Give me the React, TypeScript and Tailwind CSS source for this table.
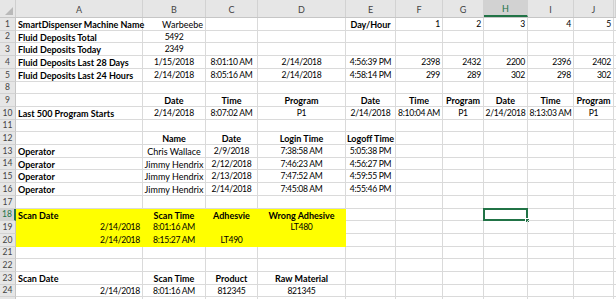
import React from "react";

type Cell = { t?: string; a?: "l" | "c" | "r"; b?: boolean };
type Row = { n: string; h: string; cells: Cell[]; yellow?: boolean; sel?: boolean };

const colW = [
  "w-[127px]",
  "w-[63px]",
  "w-[52px]",
  "w-[88px]",
  "w-[50px]",
  "w-[47px]",
  "w-[41px]",
  "w-[44px]",
  "w-[46px]",
  "w-[40px]",
  "w-[2px]",
];
const letters = ["A", "B", "C", "D", "E", "F", "G", "H", "I", "J", ""];

const L = (t: string, b = false): Cell => ({ t, a: "l", b });
const C = (t: string, b = false): Cell => ({ t, a: "c", b });
const R = (t: string, b = false): Cell => ({ t, a: "r", b });
const E: Cell = {};

const rows: Row[] = [
  { n: "1", h: "h-[13px]", cells: [L("SmartDispenser Machine Name", true), R("Warbeebe"), E, E, C("Day/Hour", true), R("1"), R("2"), R("3"), R("4"), R("5")] },
  { n: "2", h: "h-[12px]", cells: [L("Fluid Deposits Total", true), C("5492")] },
  { n: "3", h: "h-[13px]", cells: [L("Fluid Deposits Today", true), C("2349")] },
  { n: "4", h: "h-[13px]", cells: [L("Fluid Deposits Last 28 Days", true), C("1/15/2018"), C("8:01:10 AM"), C("2/14/2018"), C("4:56:39 PM"), R("2398"), R("2432"), R("2200"), R("2396"), R("2402")] },
  { n: "5", h: "h-[13px]", cells: [L("Fluid Deposits Last 24 Hours", true), C("2/14/2018"), C("8:05:16 AM"), C("2/14/2018"), C("4:58:14 PM"), R("299"), R("289"), R("302"), R("298"), R("302")] },
  { n: "8", h: "h-[12px]", cells: [] },
  { n: "9", h: "h-[13px]", cells: [E, C("Date", true), C("Time", true), C("Program", true), C("Date", true), C("Time", true), C("Program", true), C("Date", true), C("Time", true), C("Program", true)] },
  { n: "10", h: "h-[13px]", cells: [L("Last 500 Program Starts", true), C("2/14/2018"), C("8:07:02 AM"), C("P1"), C("2/14/2018"), C("8:10:04 AM"), C("P1"), C("2/14/2018"), C("8:13:03 AM"), C("P1")] },
  { n: "11", h: "h-[12px]", cells: [] },
  { n: "12", h: "h-[13px]", cells: [E, C("Name", true), C("Date", true), C("Login Time", true), C("Logoff Time", true)] },
  { n: "13", h: "h-[13px]", cells: [L("Operator", true), C("Chris Wallace"), C("2/9/2018"), C("7:38:58 AM"), C("5:05:38 PM")] },
  { n: "14", h: "h-[12px]", cells: [L("Operator", true), C("Jimmy Hendrix"), C("2/12/2018"), C("7:46:23 AM"), C("4:56:27 PM")] },
  { n: "15", h: "h-[13px]", cells: [L("Operator", true), C("Jimmy Hendrix"), C("2/13/2018"), C("7:47:52 AM"), C("4:59:55 PM")] },
  { n: "16", h: "h-[13px]", cells: [L("Operator", true), C("Jimmy Hendrix"), C("2/14/2018"), C("7:45:08 AM"), C("4:55:46 PM")] },
  { n: "17", h: "h-[13px]", cells: [] },
  { n: "18", h: "h-[12px]", yellow: true, sel: true, cells: [L("Scan Date", true), C("Scan Time", true), C("Adhesvie", true), C("Wrong Adhesive", true)] },
  { n: "19", h: "h-[13px]", yellow: true, cells: [R("2/14/2018"), C("8:01:16 AM"), E, C("LT480")] },
  { n: "20", h: "h-[13px]", yellow: true, cells: [R("2/14/2018"), C("8:15:27 AM"), C("LT490"), E] },
  { n: "21", h: "h-[12px]", cells: [] },
  { n: "22", h: "h-[13px]", cells: [] },
  { n: "23", h: "h-[13px]", cells: [L("Scan Date", true), C("Scan Time", true), C("Product", true), C("Raw Material", true)] },
  { n: "24", h: "h-[12px]", cells: [R("2/14/2018"), C("8:01:16 AM"), C("812345"), C("821345")] },
  { n: "", h: "h-[13px]", cells: [] },
];

const alignCls = { l: "justify-start pl-[2px]", c: "justify-center", r: "justify-end pr-[2px]" };

export default function App() {
  return (
    <div
      className="w-[616px] h-[299px] overflow-hidden bg-white text-black text-[9px] leading-none"
      style={{ fontFamily: "Lato, 'Noto Sans', sans-serif" }}
    >
      <div className="flex h-[18px] bg-[#e6e6e6] border-b border-[#c6c6c6]">
        <div className="w-[16px] shrink-0 relative border-r border-[#cfcfcf]">
          <svg className="absolute right-[2px] bottom-[2px]" width="8" height="8" viewBox="0 0 8 8">
            <polygon points="8,0 8,8 0,8" fill="#b9b9b9" />
          </svg>
        </div>
        {letters.map((l, i) => (
          <div
            key={i}
            className={`${colW[i]} shrink-0 flex items-center justify-center pt-[2px] text-[9px] border-r border-[#d2d2d2] ${
              l === "H" ? "bg-[#d2d2d2] text-[#217346] border-b-2 border-b-[#217346]" : "text-[#444]"
            }`}
          >
            {l}
          </div>
        ))}
      </div>
      {rows.map((r, ri) => (
        <div key={ri} className={`flex ${r.h}`}>
          <div
            className={`w-[16px] shrink-0 flex items-center justify-center text-[8.5px] border-b border-[#d2d2d2] ${
              r.sel ? "bg-[#d2d2d2] text-[#217346] border-r-2 border-r-[#217346]" : "bg-[#e6e6e6] text-[#444] border-r border-r-[#c6c6c6]"
            }`}
          >
            {r.n}
          </div>
          {colW.map((w, i) => {
            const c = r.cells[i] || {};
            const y = r.yellow && i < 4;
            const numeric = !c.b && !!c.t && /\d/.test(c.t);
            return (
              <div
                key={i}
                className={`${w} shrink-0 relative flex items-center whitespace-nowrap overflow-visible border-r border-b ${
                  y ? "bg-[#ffff00] border-[#ffff00]" : "border-[#dadada]"
                } ${alignCls[c.a || "l"]} ${c.b ? "font-bold" : ""}`}
              >
                {c.t ? (
                  <span className={`relative top-[0.5px] ${numeric ? "text-[8.6px] tracking-[-0.3px]" : ""}`}>{c.t}</span>
                ) : null}
                {r.sel && i === 7 ? (
                  <div className="absolute left-[-1px] top-[-1px] right-[-1px] bottom-[-1px] border-2 border-[#217346]">
                    <div className="absolute right-[-4px] bottom-[-4px] w-[5px] h-[5px] bg-[#217346] border border-white" />
                  </div>
                ) : null}
              </div>
            );
          })}
        </div>
      ))}
    </div>
  );
}
